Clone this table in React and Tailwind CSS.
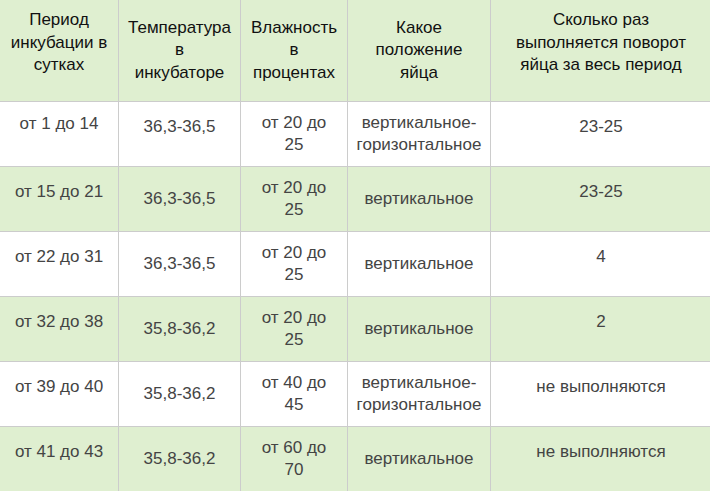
import React from "react";

const rows = [
  ["от 1 до 14", "36,3-36,5", ["от 20 до", "25"], ["вертикальное-", "горизонтальное"], "23-25"],
  ["от 15 до 21", "36,3-36,5", ["от 20 до", "25"], ["вертикальное"], "23-25"],
  ["от 22 до 31", "36,3-36,5", ["от 20 до", "25"], ["вертикальное"], "4"],
  ["от 32 до 38", "35,8-36,2", ["от 20 до", "25"], ["вертикальное"], "2"],
  ["от 39 до 40", "35,8-36,2", ["от 40 до", "45"], ["вертикальное-", "горизонтальное"], "не выполняются"],
  ["от 41 до 43", "35,8-36,2", ["от 60 до", "70"], ["вертикальное"], "не выполняются"],
];

function Lines({ lines }) {
  return (
    <div>
      {lines.map((l, i) => (
        <div key={i} className="whitespace-nowrap">{l}</div>
      ))}
    </div>
  );
}

export default function App() {
  const cellBase = "flex items-center justify-center text-center border-b border-[#cccccc]";
  return (
    <div
      className="w-[710px] h-[491px] overflow-hidden bg-white"
      style={{ fontFamily: '"Liberation Sans", Arial, sans-serif' }}
    >
      <div className="grid grid-cols-[119px_122px_107px_143px_220px] text-[17px]">
        {/* header */}
        <div className={`${cellBase} border-r h-[102px] bg-[#dfefd0] text-[#111] leading-[22.5px] pb-[15px]`}>
          <Lines lines={["Период", "инкубации в", "сутках"]} />
        </div>
        <div className={`${cellBase} border-r h-[102px] bg-[#dfefd0] text-[#111] leading-[22.5px]`}>
          <Lines lines={["Температура", "в", "инкубаторе"]} />
        </div>
        <div className={`${cellBase} border-r h-[102px] bg-[#dfefd0] text-[#111] leading-[22.5px]`}>
          <Lines lines={["Влажность", "в", "процентах"]} />
        </div>
        <div className={`${cellBase} border-r h-[102px] bg-[#dfefd0] text-[#111] leading-[22.5px]`}>
          <Lines lines={["Какое", "положение", "яйца"]} />
        </div>
        <div className={`${cellBase} h-[102px] bg-[#dfefd0] text-[#111] leading-[22.5px] pb-[15px]`}>
          <Lines lines={["Сколько раз", "выполняется поворот", "яйца за весь период"]} />
        </div>

        {rows.map((r, i) => {
          const bg = i % 2 === 0 ? "bg-white" : "bg-[#dfefd0]";
          const first = i === 0;
          return (
            <React.Fragment key={i}>
              <div className={`${cellBase} border-r h-[65px] ${bg} text-[#444] leading-[22px] ${first ? "pb-[20px]" : "pb-[14px]"}`}>
                {r[0]}
              </div>
              <div className={`${cellBase} border-r h-[65px] ${bg} text-[#444] leading-[22px] ${first ? "pb-[15px]" : "pb-0"}`}>
                {r[1]}
              </div>
              <div className={`${cellBase} border-r h-[65px] ${bg} text-[#444] leading-[22px]`}>
                <Lines lines={r[2]} />
              </div>
              <div className={`${cellBase} border-r h-[65px] ${bg} text-[#444] leading-[22px]`}>
                <Lines lines={r[3]} />
              </div>
              <div className={`${cellBase} h-[65px] ${bg} text-[#444] leading-[22px] pb-[14px]`}>
                {r[4]}
              </div>
            </React.Fragment>
          );
        })}
      </div>
    </div>
  );
}
